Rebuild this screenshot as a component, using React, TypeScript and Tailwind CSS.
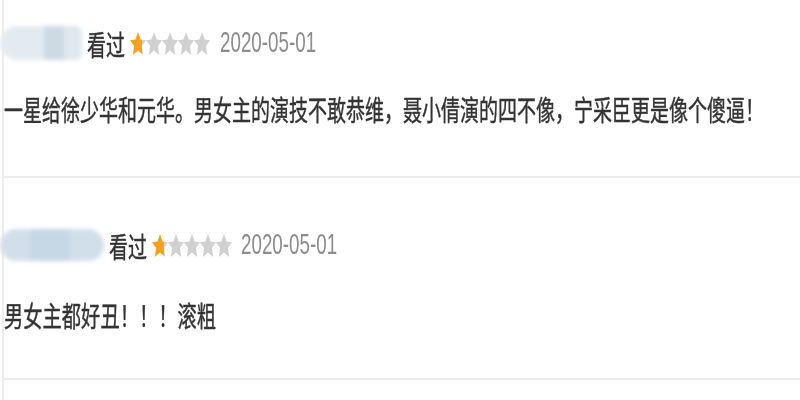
const cjk = "font-['Microsoft_YaHei','Noto_Sans_CJK_SC',sans-serif]";

function Star({ fill, id }: { fill: number; id: string }) {
  return (
    <svg viewBox="0 0 24 24" preserveAspectRatio="none" className="block h-[23px] w-[16px] shrink-0">
      <defs>
        <linearGradient id={id} x1="0" x2="1" y1="0" y2="0">
          <stop offset={`${fill * 100}%`} stopColor="#f5a11c" />
          <stop offset={`${fill * 100}%`} stopColor="#d0d0d0" />
        </linearGradient>
      </defs>
      <polygon
        points="12,0 15.9,7.9 24,8.6 17.8,14.6 19.8,24 12,19.2 4.2,24 6.2,14.6 0,8.6 8.1,7.9"
        fill={`url(#${id})`}
      />
    </svg>
  );
}

function Rating({ row }: { row: number }) {
  return (
    <div className="flex items-center">
      {[0.72, 0, 0, 0, 0].map((f, i) => (
        <Star key={i} fill={f} id={`star-${row}-${i}`} />
      ))}
    </div>
  );
}

function Blur1() {
  return (
    <div className="flex h-[34px] w-[82px] -ml-[4px] items-stretch blur-[2px]">
      <div className="w-[44px] rounded-l-full bg-[#e4ebf0]" />
      <div className="w-[20px] bg-[#cddae4]" />
      <div className="w-[18px] rounded-r-md bg-[#dfe8ee]" />
    </div>
  );
}

function Blur2() {
  return (
    <div className="flex h-[32px] w-[104px] -ml-[4px] items-stretch blur-[2px]">
      <div className="w-[30px] rounded-l-full bg-[#d2dfea]" />
      <div className="w-[40px] bg-[#c6d7e5]" />
      <div className="w-[34px] rounded-r-full bg-[#d1dfea]" />
    </div>
  );
}

function Header({ blur, row, gaps }: { blur: React.ReactNode; row: number; gaps: string[] }) {
  return (
    <div className="flex h-[34px] items-center">
      {blur}
      <span
        className={`${gaps[0]} inline-block [transform:scaleY(1.5)] text-[19px] leading-none text-[#333] [-webkit-text-stroke:0.3px_#333] ${cjk}`}
      >
        看过
      </span>
      <div className={gaps[1]}>
        <Rating row={row} />
      </div>
      <span
        className={`${gaps[2]} inline-block [transform:scaleY(1.6)] text-[18.8px] leading-none text-[#8c8c8c] font-['Liberation_Sans',sans-serif]`}
      >
        2020-05-01
      </span>
    </div>
  );
}

export default function App() {
  return (
    <div className="h-[400px] w-[800px] overflow-hidden bg-white">
      <div className="ml-[2px] h-full border-l-[2px] border-[#ededed]">
        <div className="pt-[26px] pb-[52px]">
          <Header blur={<Blur1 />} row={1} gaps={["ml-[5px]", "ml-[5px]", "ml-[10px]"]} />
          <p
            className={`mt-[34px] block h-[30px] origin-center [transform:scaleY(1.5)] text-[19px] leading-[30px] text-[#333] [-webkit-text-stroke:0.3px_#333] whitespace-nowrap ${cjk}`}
          >
            一星给徐少华和元华。男女主的演技不敢恭维，聂小倩演的四不像，宁采臣更是像个傻逼！
          </p>
        </div>
        <div className="h-[2px] bg-[#ececec]" />
        <div className="pt-[50px] pb-[48px]">
          <Header blur={<Blur2 />} row={2} gaps={["ml-[5px]", "ml-[5px]", "ml-[9px]"]} />
          <p
            className={`mt-[38px] block h-[30px] origin-center [transform:scaleY(1.5)] text-[19.3px] leading-[30px] text-[#333] [-webkit-text-stroke:0.3px_#333] whitespace-nowrap ${cjk}`}
          >
            男女主都好丑！！！滚粗
          </p>
        </div>
        <div className="h-[2px] bg-[#ececec]" />
      </div>
    </div>
  );
}
